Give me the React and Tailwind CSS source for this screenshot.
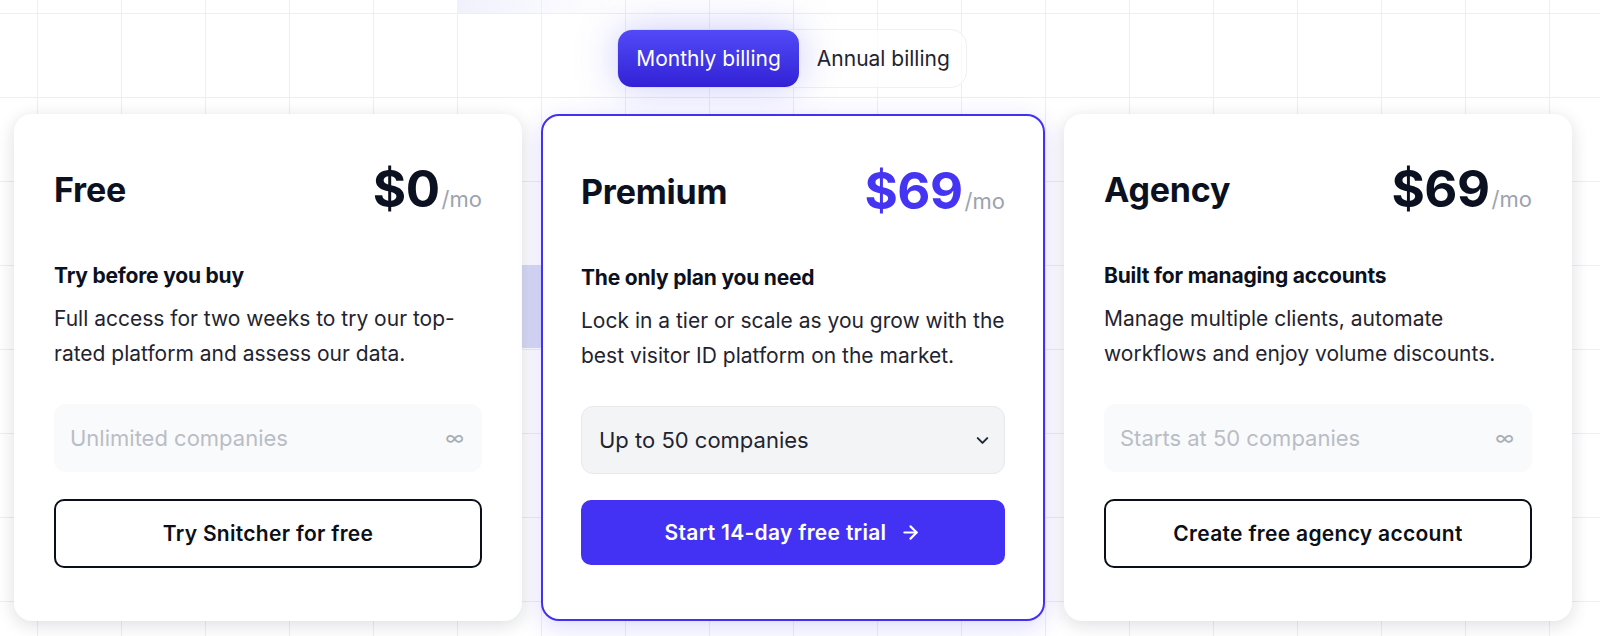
import { ArrowRight, ChevronDown } from "lucide-react";

const font = { fontFamily: "Inter, 'Noto Sans', sans-serif" };

function Price({ amount, accent }) {
  return (
    <div className="flex items-baseline">
      <span
        className={`text-[51px] font-bold leading-none tracking-[-0.5px] ${
          accent ? "text-[#4535f2]" : "text-[#0b1120]"
        }`}
      >
        {amount}
      </span>
      <span className="text-[22px] text-[#9ca3af] ml-[2px]">/mo</span>
    </div>
  );
}

function Card({ plan, featured }) {
  return (
    <div
      className={`bg-white rounded-[18px] h-[507px] pt-[47px] ${
        featured
          ? "px-[38px] border-2 border-[#4330f5] shadow-[0_6px_24px_rgba(67,48,245,0.18)]"
          : "px-[40px] shadow-[0_4px_18px_rgba(15,23,42,0.14)]"
      }`}
    >
      <div className="flex items-center justify-between h-[57px]">
        <h2 className="text-[34px] font-bold text-[#0b1120] tracking-[-0.2px]">{plan.name}</h2>
        <Price amount={plan.price} accent={featured} />
      </div>

      <p className="mt-[44px] text-[21px] font-bold leading-[28px] text-[#0b1120] tracking-[-0.2px]">
        {plan.tagline}
      </p>
      <p className="mt-[11px] text-[21px] leading-[35px] text-[#1f2430]">
        {plan.desc}
      </p>

      {featured ? (
        <div className="mt-[33px] h-[68px] rounded-[12px] bg-[#f3f4f6] border border-[#e8e9ec] flex items-center justify-between pl-[17px] pr-[12px]">
          <span className="text-[22px] text-[#1f2430]">{plan.field}</span>
          <ChevronDown size={19} strokeWidth={2.5} className="text-[#1f2937]" />
        </div>
      ) : (
        <div className="mt-[33px] h-[68px] rounded-[12px] bg-[#f9fafb] flex items-center justify-between pl-[16px] pr-[18px]">
          <span className="text-[22px] text-[#b9bdc6]">{plan.field}</span>
          <span className="text-[20px] text-[#a9adb6]">∞</span>
        </div>
      )}

      {featured ? (
        <button className="mt-[26px] w-full h-[65px] rounded-[10px] bg-[#4332f3] text-white text-[21px] font-semibold tracking-[0.3px] flex items-center justify-center gap-[14px]">
          {plan.cta}
          <ArrowRight size={21} strokeWidth={2.5} />
        </button>
      ) : (
        <button className="mt-[27px] w-full h-[69px] rounded-[10px] border-2 border-[#0b0f19] bg-white text-[#0b0f19] text-[21px] font-semibold tracking-[0.3px]">
          {plan.cta}
        </button>
      )}
    </div>
  );
}

const plans = [
  {
    name: "Free",
    price: "$0",
    tagline: "Try before you buy",
    desc: "Full access for two weeks to try our top-rated platform and assess our data.",
    field: "Unlimited companies",
    cta: "Try Snitcher for free",
  },
  {
    name: "Premium",
    price: "$69",
    tagline: "The only  plan you need",
    desc: "Lock in a tier or scale as you grow with the best visitor ID platform on the market.",
    field: "Up to 50 companies",
    cta: "Start 14-day free trial",
    featured: true,
  },
  {
    name: "Agency",
    price: "$69",
    tagline: "Built for managing accounts",
    desc: "Manage multiple clients, automate workflows and enjoy volume discounts.",
    field: "Starts at 50 companies",
    cta: "Create free agency account",
  },
];

export default function App() {
  return (
    <div className="relative w-full h-[636px] overflow-hidden bg-white" style={font}>
      {/* background grid */}
      <div className="absolute inset-0 bg-[linear-gradient(to_right,#ececfb_1px,transparent_1px),linear-gradient(to_bottom,#ececfb_1px,transparent_1px)] bg-[size:84px_84px] bg-[position:37px_13px]" />
      <div className="absolute left-[457px] top-0 w-[170px] h-[13px] bg-gradient-to-r from-[#f1f1fd] to-transparent" />
      <div className="absolute left-[457px] top-[265px] w-[84px] h-[83px] bg-[#dadcf5]" />

      <div className="relative flex justify-center pt-[29px]">
        <div className="mr-[16px] flex items-center rounded-[16px] border border-[#f0f0f5] bg-white/70 pr-[16px]">
          <button className="h-[57px] px-[18px] rounded-[14px] bg-gradient-to-b from-[#5249f7] to-[#3320d6] text-white text-[21px] shadow-[0_0_40px_rgba(99,102,241,0.35)]">
            Monthly billing
          </button>
          <span className="pl-[18px] text-[21px] text-[#1f2430]">Annual billing</span>
        </div>
      </div>

      <div className="relative ml-[14px] mt-[26px] grid grid-cols-[508px_504px_508px] gap-[19px]">
        {plans.map((p) => (
          <Card key={p.name} plan={p} featured={p.featured} />
        ))}
      </div>
    </div>
  );
}
